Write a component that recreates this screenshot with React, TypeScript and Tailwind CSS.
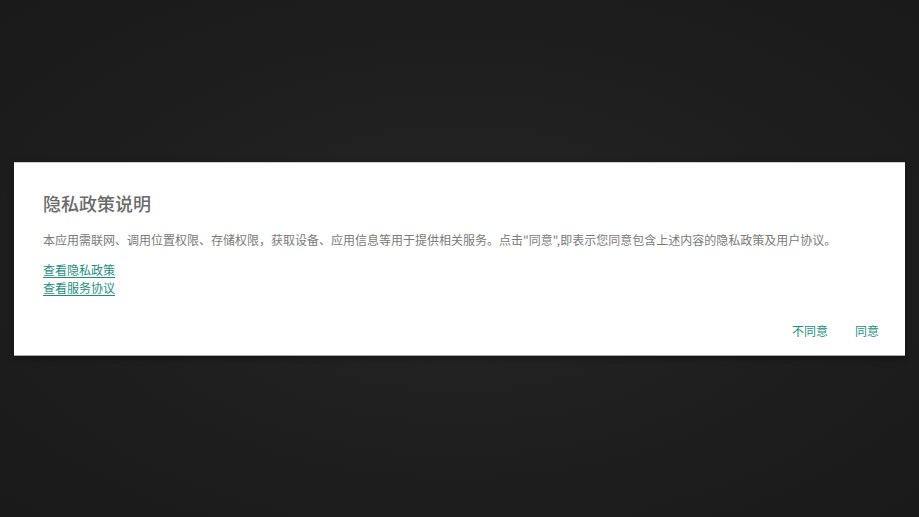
const FONT = { fontFamily: '"Noto Sans CJK SC", "Noto Sans", sans-serif' };

export default function App() {
  return (
    <div
      className="h-[517px] w-full flex items-center bg-[radial-gradient(ellipse_at_center,#262626_0%,#1e1e1e_55%,#1a1a1a_100%)]"
      style={FONT}
    >
      <div className="mx-[14px] flex-1 bg-white border-t border-t-[#cfcfcf] border-b border-b-[#a9a9a9] shadow-[0_2px_6px_rgba(0,0,0,0.4)]">
        <div className="pl-[29px] pr-[26px] pt-[27px] pb-[14px]">
          <h2 className="text-[18px] leading-[26px] font-medium text-[#6a6a6a]">隐私政策说明</h2>
          <p className="mt-[14px] text-[12px] leading-[20px] text-[#7a7a7a]">
            本应用需联网、调用位置权限、存储权限，获取设备、应用信息等用于提供相关服务。点击"同意",即表示您同意包含上述内容的隐私政策及用户协议。
          </p>
          <div className="mt-[11px] flex flex-col items-start text-[12px] leading-[18px] text-[#1f8c80]">
            <a className="underline underline-offset-2">查看隐私政策</a>
            <a className="underline underline-offset-2">查看服务协议</a>
          </div>
          <div className="mt-[24px] flex justify-end gap-[27px] text-[12px] leading-[20px] text-[#1f8c80]">
            <button>不同意</button>
            <button>同意</button>
          </div>
        </div>
      </div>
    </div>
  );
}
